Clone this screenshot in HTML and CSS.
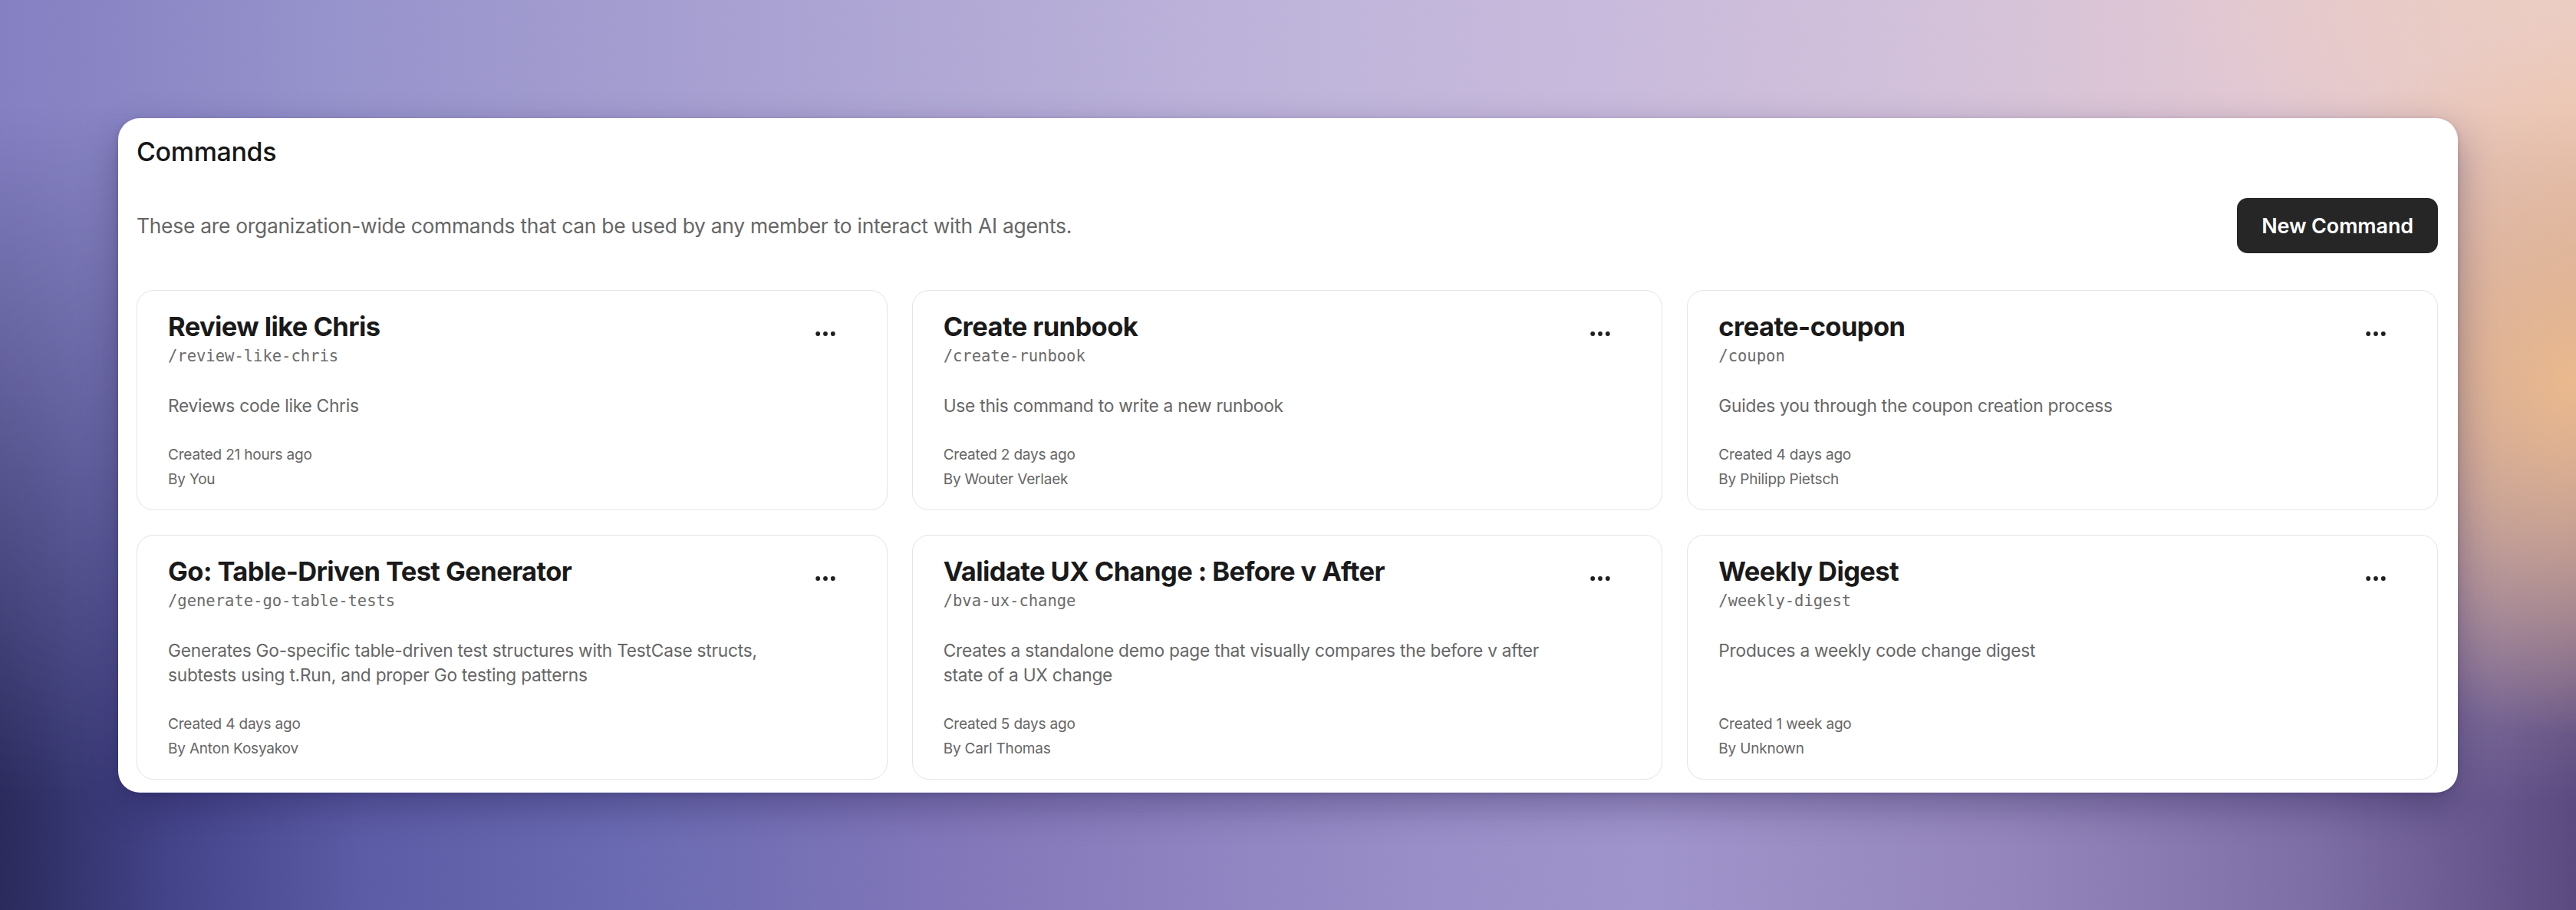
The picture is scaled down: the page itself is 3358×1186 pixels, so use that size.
FILE: index.html
```html
<!DOCTYPE html>
<html lang="en">
<head>
<meta charset="utf-8">
<title>Commands</title>
<link rel="stylesheet" href="styles.css">
</head>
<body>
<div class="backdrop">
  <div class="backdrop-bottom"></div>
  <div class="page">
    <section class="panel">
      <h1 class="panel-title">Commands</h1>
      <div class="intro-row">
        <p class="intro">These are organization-wide commands that can be used by any member to interact with AI agents.</p>
        <button class="btn-primary">New Command</button>
      </div>
      <div class="grid">
        <article class="card">
          <div class="card-head">
            <div class="card-titles">
              <h2 class="card-title">Review like Chris</h2>
              <div class="slug">/review-like-chris</div>
            </div>
            <button class="menu-btn" aria-label="More"><svg width="26" height="8" viewBox="0 0 26 8"><circle cx="3.2" cy="4" r="2.9"/><circle cx="13" cy="4" r="2.9"/><circle cx="22.8" cy="4" r="2.9"/></svg></button>
          </div>
          <p class="desc">Reviews code like Chris</p>
          <div class="meta"><div>Created 21 hours ago</div><div>By You</div></div>
        </article>
        <article class="card">
          <div class="card-head">
            <div class="card-titles">
              <h2 class="card-title">Create runbook</h2>
              <div class="slug">/create-runbook</div>
            </div>
            <button class="menu-btn" aria-label="More"><svg width="26" height="8" viewBox="0 0 26 8"><circle cx="3.2" cy="4" r="2.9"/><circle cx="13" cy="4" r="2.9"/><circle cx="22.8" cy="4" r="2.9"/></svg></button>
          </div>
          <p class="desc">Use this command to write a new runbook</p>
          <div class="meta"><div>Created 2 days ago</div><div>By Wouter Verlaek</div></div>
        </article>
        <article class="card">
          <div class="card-head">
            <div class="card-titles">
              <h2 class="card-title">create-coupon</h2>
              <div class="slug">/coupon</div>
            </div>
            <button class="menu-btn" aria-label="More"><svg width="26" height="8" viewBox="0 0 26 8"><circle cx="3.2" cy="4" r="2.9"/><circle cx="13" cy="4" r="2.9"/><circle cx="22.8" cy="4" r="2.9"/></svg></button>
          </div>
          <p class="desc">Guides you through the coupon creation process</p>
          <div class="meta"><div>Created 4 days ago</div><div>By Philipp Pietsch</div></div>
        </article>
        <article class="card">
          <div class="card-head">
            <div class="card-titles">
              <h2 class="card-title">Go: Table-Driven Test Generator</h2>
              <div class="slug">/generate-go-table-tests</div>
            </div>
            <button class="menu-btn" aria-label="More"><svg width="26" height="8" viewBox="0 0 26 8"><circle cx="3.2" cy="4" r="2.9"/><circle cx="13" cy="4" r="2.9"/><circle cx="22.8" cy="4" r="2.9"/></svg></button>
          </div>
          <p class="desc">Generates Go-specific table-driven test structures with TestCase structs, subtests using t.Run, and proper Go testing patterns</p>
          <div class="meta"><div>Created 4 days ago</div><div>By Anton Kosyakov</div></div>
        </article>
        <article class="card">
          <div class="card-head">
            <div class="card-titles">
              <h2 class="card-title">Validate UX Change : Before v After</h2>
              <div class="slug">/bva-ux-change</div>
            </div>
            <button class="menu-btn" aria-label="More"><svg width="26" height="8" viewBox="0 0 26 8"><circle cx="3.2" cy="4" r="2.9"/><circle cx="13" cy="4" r="2.9"/><circle cx="22.8" cy="4" r="2.9"/></svg></button>
          </div>
          <p class="desc">Creates a standalone demo page that visually compares the before v after state of a UX change</p>
          <div class="meta"><div>Created 5 days ago</div><div>By Carl Thomas</div></div>
        </article>
        <article class="card">
          <div class="card-head">
            <div class="card-titles">
              <h2 class="card-title">Weekly Digest</h2>
              <div class="slug">/weekly-digest</div>
            </div>
            <button class="menu-btn" aria-label="More"><svg width="26" height="8" viewBox="0 0 26 8"><circle cx="3.2" cy="4" r="2.9"/><circle cx="13" cy="4" r="2.9"/><circle cx="22.8" cy="4" r="2.9"/></svg></button>
          </div>
          <p class="desc">Produces a weekly code change digest</p>
          <div class="meta"><div>Created 1 week ago</div><div>By Unknown</div></div>
        </article>
      </div>
    </section>
  </div>
</div>
</body>
</html>
```

FILE: styles.css
```css
* { box-sizing: border-box; }

html, body {
  margin: 0;
  height: 1186px;
  overflow: hidden;
}

body {
  font-family: Inter, "Noto Sans", "Liberation Sans", sans-serif;
  color: #1c1c1c;
}

/* background: top hues, blended into darker bottom hues */
.backdrop {
  display: grid;
  height: 1186px;
  background: linear-gradient(90deg, #8480c2 0%, #9894cc 14%, #aaa2d2 30%, #bdb3da 48%, #c8badc 62%, #d4c2da 76%, #e2c8d2 88%, #eccabe 100%);
}

.backdrop-bottom {
  grid-area: 1 / 1;
  height: 1186px;
  background: linear-gradient(90deg, #2a2a5c 0%, #45458c 7%, #5c5ca6 14%, #6a6ab2 24%, #8478ba 38%, #9a8ec8 55%, #a094cc 64%, #9486bc 78%, #7e6ea6 90%, #5a4a80 100%);
  -webkit-mask-image: linear-gradient(180deg, rgba(0,0,0,0) 12%, rgba(0,0,0,0.55) 55%, #000 88%);
  mask-image: linear-gradient(180deg, rgba(0,0,0,0) 12%, rgba(0,0,0,0.55) 55%, #000 88%);
}

.page {
  grid-area: 1 / 1;
  position: relative;
  padding: 154px 0 0 154px;
  background:
    radial-gradient(ellipse 560px 560px at 100% 42%, rgba(236, 186, 140, 0.97), rgba(236, 186, 140, 0) 82%),
    radial-gradient(ellipse 700px 260px at 100% 0%, rgba(236, 206, 196, 0.7), rgba(236, 206, 196, 0) 80%);
}

.panel {
  width: 3050px;
  background: #ffffff;
  border-radius: 28px;
  padding: 23px 26px 17px 24px;
  box-shadow: 0 18px 48px rgba(30, 20, 70, 0.35), 0 2px 6px rgba(30, 20, 70, 0.15);
}

.panel-title {
  margin: 0;
  font-size: 34px;
  line-height: 41px;
  font-weight: 500;
  letter-spacing: -0.01em;
  color: #161616;
}

.intro-row {
  display: flex;
  align-items: center;
  justify-content: space-between;
  margin-top: 40px;
}

.intro {
  margin: 0;
  font-size: 26.4px;
  line-height: 36px;
  color: #666666;
  letter-spacing: -0.01em;
}

.btn-primary {
  height: 72px;
  padding: 0 32px;
  border: none;
  border-radius: 14px;
  background: #262626;
  color: #ffffff;
  font-family: inherit;
  font-size: 27px;
  font-weight: 600;
  letter-spacing: -0.005em;
}

.grid {
  display: grid;
  grid-template-columns: repeat(3, 1fr);
  gap: 32px;
  margin-top: 48px;
}

.card {
  display: flex;
  flex-direction: column;
  border: 1px solid #e4e4e7;
  border-radius: 22px;
  padding: 27px 40px 23px 40px;
  background: #ffffff;
}

.card-head {
  display: flex;
  justify-content: space-between;
  align-items: flex-start;
}

.card-title {
  margin: 0;
  font-size: 34.5px;
  line-height: 40px;
  font-weight: 700;
  letter-spacing: -0.017em;
  color: #1a1a1a;
}

.slug {
  margin-top: 4px;
  font-family: "DejaVu Sans Mono", "Liberation Mono", monospace;
  font-size: 20.5px;
  line-height: 28px;
  color: #6b6b6b;
}

.menu-btn {
  width: 48px;
  height: 48px;
  margin: 5px 16px 0 0;
  padding: 0;
  border: none;
  background: transparent;
  display: flex;
  align-items: center;
  justify-content: center;
  fill: #1f1f1f;
}

.desc {
  margin: 35px 0 0;
  max-width: 800px;
  font-size: 22.7px;
  line-height: 32px;
  color: #666666;
  letter-spacing: -0.01em;
}

.meta {
  margin-top: auto;
  padding-top: 32px;
  font-size: 19px;
  line-height: 32px;
  color: #666666;
  letter-spacing: -0.01em;
}
```
